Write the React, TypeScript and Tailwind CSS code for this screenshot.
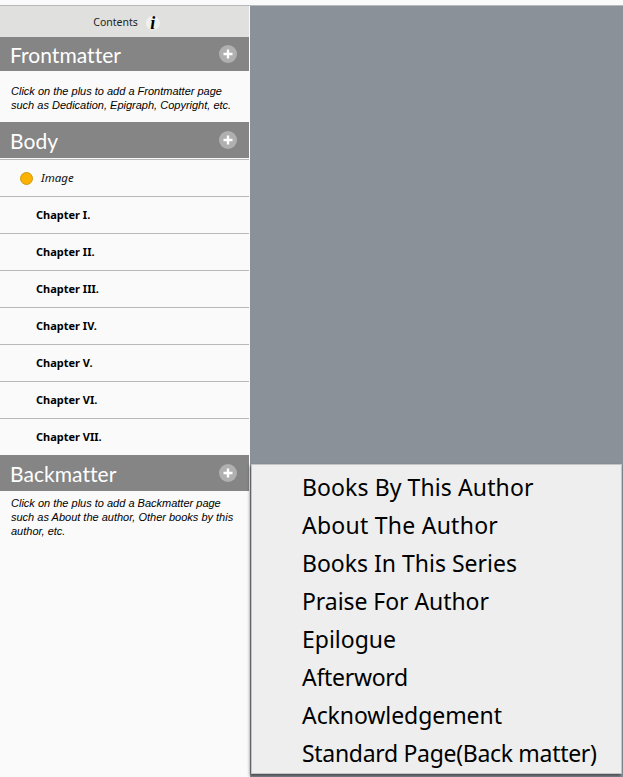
import React from "react";

const ui = "font-['Noto_Sans',sans-serif]";
const arial = "font-['Liberation_Sans',sans-serif]";

function Plus() {
  return (
    <svg width="18" height="18" viewBox="0 0 18 18" className="block">
      <circle cx="9" cy="9" r="9" fill="#b0b0b0" />
      <path d="M9 4.5v9M4.5 9h9" stroke="#fff" strokeWidth="2.4" />
    </svg>
  );
}

function Head({ title, cls }: { title: string; cls: string }) {
  return (
    <div className={`flex items-center justify-between bg-[#858585] pl-[10px] pr-[12px] text-white ${cls}`}>
      <span className="font-['Lato',sans-serif] text-[21px] leading-none tracking-[0.05px]">{title}</span>
      <Plus />
    </div>
  );
}

const chapters = ["Chapter I.", "Chapter II.", "Chapter III.", "Chapter IV.", "Chapter V.", "Chapter VI.", "Chapter VII."];
const menu = [
  ["Books By This Author", "tracking-[0.1px]"],
  ["About The Author", "tracking-[0.25px]"],
  ["Books In This Series", "tracking-normal"],
  ["Praise For Author", "tracking-[-0.06px]"],
  ["Epilogue", "tracking-normal"],
  ["Afterword", "tracking-[-0.3px]"],
  ["Acknowledgement", "tracking-[-0.07px]"],
  ["Standard Page(Back matter)", "tracking-[-0.31px]"],
];

export default function App() {
  return (
    <div className="relative h-[777px] w-[623px] overflow-hidden bg-[#fafafa]">
      <div className="h-[5px] bg-[#fafafa]" />
      <div className="flex h-[772px] border-t border-[#b8b8b8]">
        <div className="w-[249px] shrink-0 bg-[#fafafa]">
          <div className="flex h-[31px] items-center justify-center gap-[8px] bg-[#e0e0de] pl-[4px] pt-[2px]">
            <span className={`${ui} text-[10.5px] text-[#222]`}>Contents</span>
            <span className="flex h-[14px] w-[14px] items-center justify-center rounded-full bg-[#f0f0ee] font-['Liberation_Serif',serif] text-[18px] font-bold italic leading-none text-black">i</span>
          </div>
          <Head title="Frontmatter" cls="h-[34px]" />
          <div className={`${arial} h-[51px] pl-[11px] pt-[13px] text-[11px] italic leading-[14px] text-black`}>
            Click on the plus to add a Frontmatter page
            <br />
            such as Dedication, Epigraph, Copyright, etc.
          </div>
          <Head title="Body" cls="h-[36px]" />
          <div className="mt-[1px] flex h-[38px] items-center border-y border-[#b8b8b8] pl-[20px]">
            <span className="h-[13px] w-[13px] rounded-full border border-[#d09a10] bg-[#fbb200]" />
            <span className={`${ui} ml-[8px] text-[11.5px] italic text-[#111]`}>Image</span>
          </div>
          {chapters.map((c, i) => (
            <div
              key={c}
              className={`${ui} flex items-center pl-[36px] text-[11px] font-bold text-black ${i < 6 ? "h-[37px] border-b border-[#b8b8b8]" : "h-[36px]"}`}
            >
              {c}
            </div>
          ))}
          <Head title="Backmatter" cls="h-[36px]" />
          <div className={`${arial} pl-[11px] pt-[5px] text-[11px] italic leading-[14px] text-black`}>
            Click on the plus to add a Backmatter page
            <br />
            such as About the author, Other books by this
            <br />
            author, etc.
          </div>
        </div>
        <div className="ml-[1px] flex-1 bg-[#8b9199]" />
      </div>
      <div className="absolute left-[251px] top-[464px] h-[310px] w-[371px] border border-[#c4c4c4] bg-[#eeeeee] pl-[50px] pt-[3px] shadow-[-1px_2px_3px_rgba(0,0,0,0.5)]">
        {menu.map(([m, t]) => (
          <div key={m} className={`${ui} ${t} h-[38px] whitespace-nowrap text-[23px] leading-[38px] text-black`}>
            {m}
          </div>
        ))}
      </div>
    </div>
  );
}
